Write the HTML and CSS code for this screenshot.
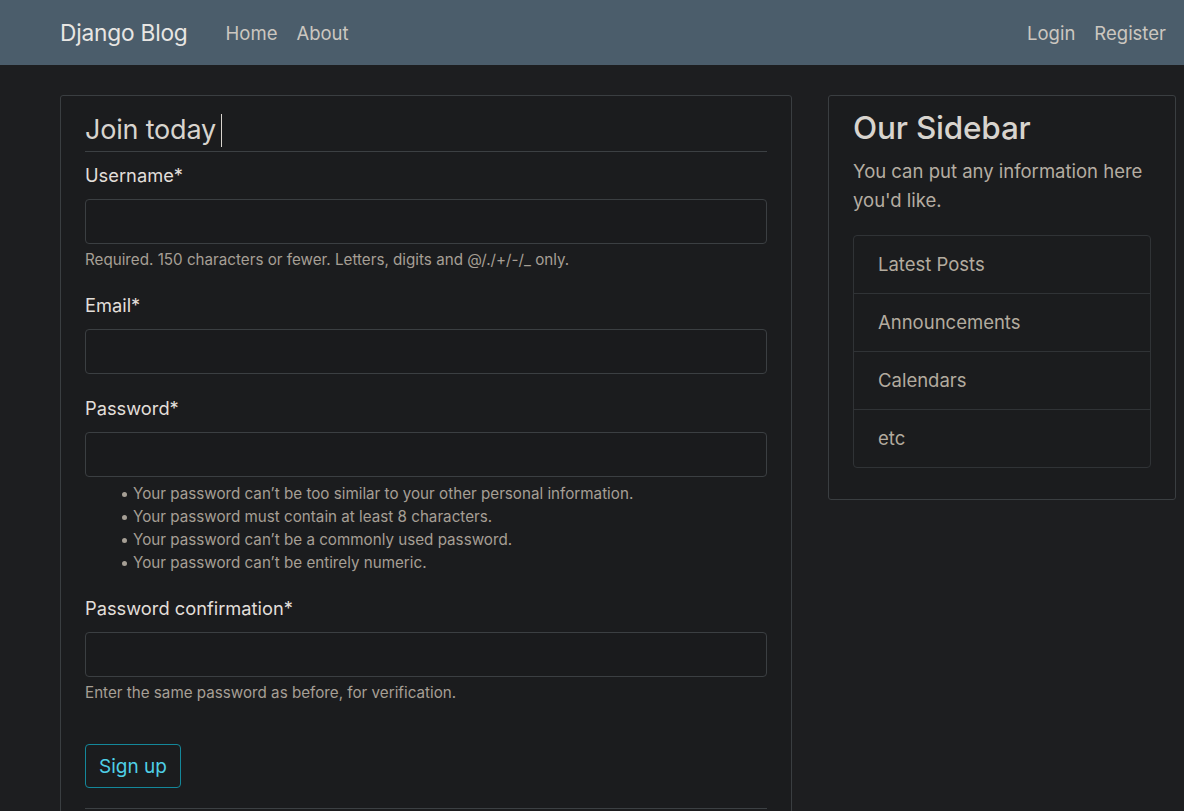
FILE: index.html
```html
<!DOCTYPE html>
<html lang="en">
<head>
<meta charset="utf-8">
<title>Django Blog</title>
<link rel="stylesheet" href="styles.css">
</head>
<body>
<header class="navbar">
  <a class="brand" href="#">Django Blog</a>
  <nav class="nav-left">
    <a href="#">Home</a>
    <a href="#">About</a>
  </nav>
  <nav class="nav-right">
    <a href="#">Login</a>
    <a href="#">Register</a>
  </nav>
</header>
<main class="main">
  <section class="card form-card">
    <form>
      <div class="legend">Join today<span class="caret"></span></div>
      <div class="group">
        <label class="label">Username*</label>
        <div class="input"></div>
        <div class="help">Required. 150 characters or fewer. Letters, digits and @/./+/-/_ only.</div>
      </div>
      <div class="group">
        <label class="label">Email*</label>
        <div class="input"></div>
      </div>
      <div class="group">
        <label class="label">Password*</label>
        <div class="input"></div>
        <ul class="rules">
          <li>Your password can’t be too similar to your other personal information.</li>
          <li>Your password must contain at least 8 characters.</li>
          <li>Your password can’t be a commonly used password.</li>
          <li>Your password can’t be entirely numeric.</li>
        </ul>
      </div>
      <div class="group">
        <label class="label">Password confirmation*</label>
        <div class="input"></div>
        <div class="help">Enter the same password as before, for verification.</div>
      </div>
      <div class="actions">
        <button type="button" class="btn">Sign up</button>
      </div>
      <div class="footer-line"></div>
    </form>
  </section>
  <aside class="card side-card">
    <h3 class="side-title">Our Sidebar</h3>
    <p class="side-text">You can put any information here you'd like.</p>
    <ul class="list-group">
      <li>Latest Posts</li>
      <li>Announcements</li>
      <li>Calendars</li>
      <li>etc</li>
    </ul>
  </aside>
</main>
</body>
</html>
```
FILE: styles.css
```css
* { box-sizing: border-box; }
html, body { margin: 0; padding: 0; }
body {
  background: #1d1e20;
  color: #e8e6e3;
  font-family: Inter, "Noto Sans", "Liberation Sans", sans-serif;
  height: 811px;
  overflow: hidden;
}
a { text-decoration: none; color: inherit; }

.navbar {
  height: 65px;
  background: #4b5d6b;
  display: flex;
  align-items: center;
  padding: 0 18px 0 60px;
}
.brand {
  font-size: 22.7px;
  color: #e8e6e3;
  margin-right: 38px;
  letter-spacing: -0.2px;
}
.nav-left, .nav-right {
  display: flex;
  gap: 19px;
  font-size: 18.5px;
  color: #ccc7c0;
}
.nav-right { margin-left: auto; gap: 19px; }

.main {
  display: flex;
  align-items: flex-start;
  gap: 36px;
  padding: 30px 0 0 60px;
}
.card {
  background: #1b1c1e;
  border: 1px solid #3a3e41;
  border-radius: 3px;
}
.form-card {
  width: 732px;
  padding: 0 24px 0 24px;
  min-height: 740px;
}
.legend {
  font-size: 27px;
  line-height: 32px;
  padding: 18px 0 4px;
  margin-bottom: 10px;
  border-bottom: 1px solid #3c4043;
  color: #d8d4ce;
  letter-spacing: -0.2px;
}
.caret {
  display: inline-block;
  width: 1px;
  height: 33px;
  background: #d8d4ce;
  margin-left: 5px;
  vertical-align: -8px;
}
.group { margin-bottom: 21px; }
.label {
  display: block;
  font-size: 18.3px;
  line-height: 27px;
  margin-bottom: 10px;
  color: #e2dfda;
}
.input {
  height: 45px;
  border: 1px solid #3b3f42;
  border-radius: 4px;
  background: #1a1b1d;
}
.help {
  font-size: 15.2px;
  line-height: 22px;
  margin-top: 5px;
  margin-bottom: 2px;
  color: #a69f95;
}
.rules {
  margin: 5px 0 0;
  padding-left: 48px;
  font-size: 15.2px;
  line-height: 23px;
  color: #a69f95;
  list-style: none;
}
.rules li { position: relative; }
.rules li::before {
  content: "";
  position: absolute;
  left: -11px;
  top: 10px;
  width: 5px;
  height: 5px;
  border-radius: 50%;
  background: #a69f95;
}
.actions { padding-top: 19px; }
.btn {
  font-family: inherit;
  font-size: 19px;
  height: 44px;
  width: 96px;
  background: transparent;
  color: #4fd0e6;
  border: 1px solid #14879a;
  border-radius: 4px;
  padding: 0;
}
.footer-line {
  margin-top: 20px;
  border-top: 1px solid #3c4043;
  height: 20px;
}

.side-card {
  width: 348px;
  padding: 13px 24px 31px;
}
.side-title {
  margin: 0;
  font-size: 31.5px;
  line-height: 38px;
  font-weight: 500;
  color: #d8d4ce;
  letter-spacing: -0.2px;
}
.side-text {
  margin: 10px 0 20px;
  font-size: 18.5px;
  line-height: 29px;
  color: #b5ada2;
}
.list-group {
  list-style: none;
  margin: 0;
  padding: 0;
  border: 1px solid #303336;
  border-radius: 4px;
}
.list-group li {
  padding: 15px 24px;
  line-height: 27px;
  font-size: 18.5px;
  color: #b3ab9f;
  border-top: 1px solid #303336;
}
.list-group li:first-child { border-top: none; }
```
